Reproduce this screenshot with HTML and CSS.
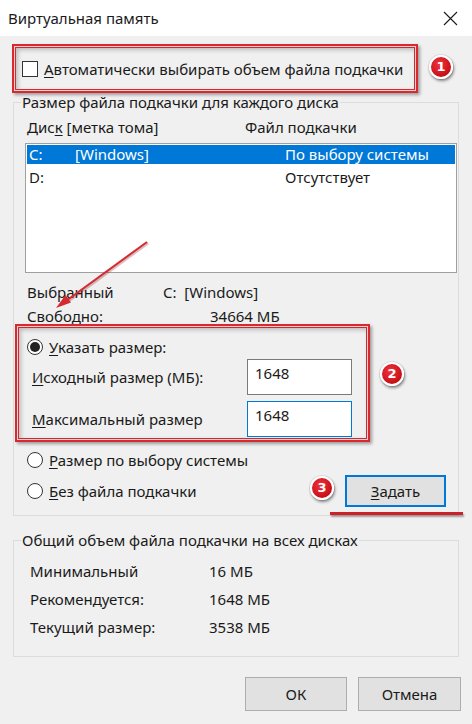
FILE: index.html
```html
<!DOCTYPE html>
<html lang="ru">
<head>
<meta charset="utf-8">
<title>Виртуальная память</title>
<link rel="stylesheet" href="styles.css">
</head>
<body>
<div class="window">
  <header class="titlebar">
    <span class="title">Виртуальная память</span>
    <svg class="close" width="15" height="15" viewBox="0 0 15 15"><path d="M1 1L14 14M14 1L1 14" stroke="#1a1a1a" stroke-width="1.1" fill="none"/></svg>
  </header>

  <main class="content">
    <div class="mark mark-auto">
      <label class="check-row"><span class="checkbox"></span><span><u>А</u>втоматически выбирать объем файла подкачки</span></label>
    </div>

    <fieldset class="group group-disks">
      <legend>Размер файла подкачки для каждого диска</legend>
      <div class="list-head"><span>Дис<u>к</u> [метка тома]</span><span>Файл подкачки</span></div>
      <div class="listbox">
        <div class="row selected"><span>C:</span><span>[Windows]</span><span>По выбору системы</span></div>
        <div class="row"><span>D:</span><span></span><span>Отсутствует</span></div>
      </div>
      <div class="info">
        <span>Выбранный</span><span class="span2">C:&nbsp;&nbsp;[Windows]</span>
        <span>Свободно:</span><span></span><span>34664 МБ</span>
      </div>

      <div class="mark mark-size">
        <div class="radio-row"><span class="radio on"></span><span><u>У</u>казать размер:</span></div>
        <div class="field-row first"><span><u>И</u>сходный размер (МБ):</span><span class="input">1648</span></div>
        <div class="field-row"><span><u>М</u>аксимальный размер</span><span class="input focus">1648</span></div>
      </div>

      <div class="radio-row sys"><span class="radio"></span><span><u>Р</u>азмер по выбору системы</span></div>
      <div class="last-row">
        <div class="radio-row"><span class="radio"></span><span><u>Б</u>ез файла подкачки</span></div>
        <button class="btn default"><u>З</u>адать</button>
      </div>
    </fieldset>

    <fieldset class="group group-total">
      <legend>Общий объем файла подкачки на всех дисках</legend>
      <div class="totals">
        <span>Минимальный</span><span>16 МБ</span>
        <span>Рекомендуется:</span><span>1648 МБ</span>
        <span>Текущий размер:</span><span>3538 МБ</span>
      </div>
    </fieldset>

    <div class="actions">
      <button class="btn">ОК</button>
      <button class="btn">Отмена</button>
    </div>
  </main>

  <svg class="arrow" width="472" height="724" viewBox="0 0 472 724">
    <line x1="147" y1="242" x2="66" y2="301" stroke="rgba(120,0,0,0.25)" stroke-width="3" transform="translate(1,1)"/>
    <line x1="147" y1="242" x2="66" y2="301" stroke="#d42a30" stroke-width="2"/>
    <polygon points="56,308 71,302.5 65.5,295" fill="#d42a30"/>
  </svg>
  <div class="badge b1">1</div>
  <div class="badge b2">2</div>
  <div class="badge b3">3</div>
  <div class="underline-mark"></div>
</div>
</body>
</html>
```

FILE: styles.css
```css
* { box-sizing: border-box; }
html, body { margin: 0; padding: 0; }
body {
  background: #f0f0f0;
  font-family: "Noto Sans", "Open Sans", sans-serif;
  font-size: 15px;
  color: #1a1a1a;
}
u { text-decoration-thickness: 1px; text-underline-offset: 2px; }

.window {
  position: relative;
  width: 472px;
  height: 724px;
  overflow: hidden;
}

.titlebar {
  height: 36px;
  background: #fff;
  display: flex;
  align-items: center;
  justify-content: space-between;
  padding: 0 14px 0 8px;
}
.title { font-size: 15px; line-height: 20px; }
.close { margin-top: 1px; }

.content { padding: 0 13px; }

/* red annotation frames */
.mark {
  border: 2px solid #d42a30;
  box-shadow: inset 0 0 0 1px #f3cfcf, inset 0 0 0 2px #cf2a2f, inset 2px 2px 4px 2px rgba(0,0,0,0.22), 2px 2px 3px rgba(0,0,0,0.35);
}
.mark-auto {
  margin: 8px 0 0 -1px;
  width: 406px;
  height: 49px;
  display: flex;
  align-items: center;
  padding-left: 8px;
}
.check-row { display: flex; align-items: center; gap: 6px; line-height: 20px; }
.checkbox {
  width: 16px; height: 16px;
  border: 1px solid #333;
  background: #fff;
}

.group {
  margin: 0;
  border: 1px solid #dcdcdc;
  min-width: 0;
}
.group legend {
  padding: 0 1px;
  line-height: 18px;
}
.group-disks { padding: 6px 12px 8px 13px; }
.group-disks legend { margin-left: -6px; }

.list-head {
  display: grid;
  grid-template-columns: 218px 1fr;
  line-height: 20px;
}
.listbox {
  margin: 6px -11px 0 -2px;
  height: 130px;
  border: 1px solid #a0a0a0;
  background: #fff;
  padding: 1px;
}
.row {
  display: grid;
  grid-template-columns: 46px 210px 1fr;
  padding-left: 2px;
  height: 19px;
  line-height: 19px;
  margin-bottom: 4px;
}
.row.selected { background: #0078d7; color: #fff; }

.info {
  margin-top: 7px;
  display: grid;
  grid-template-columns: 136px 47px 1fr;
  line-height: 24px;
}
.span2 { grid-column: span 2; }

.mark-size {
  margin: -4px 0 0 -12px;
  width: 355px;
  height: 118px;
  padding: 10px 0 0 10px;
}
.radio-row { display: flex; align-items: center; gap: 6px; line-height: 22px; }
.radio {
  width: 16px; height: 16px;
  border-radius: 50%;
  border: 1px solid #333;
  background: #fff;
  display: flex; align-items: center; justify-content: center;
}
.radio.on::after {
  content: "";
  width: 10px; height: 10px;
  border-radius: 50%;
  background: #222;
}
.field-row {
  display: grid;
  grid-template-columns: 215px 105px;
  align-items: center;
  padding-left: 5px;
  margin-top: 6px;
}
.field-row.first { margin-top: 1px; }
.input {
  height: 36px;
  border: 1px solid #7a7a7a;
  background: #fff;
  padding: 3px 0 0 7px;
  line-height: 20px;
}
.input.focus { border-color: #0078d7; }

.radio-row.sys { margin-top: 7px; }
.last-row {
  margin-top: 4px;
  display: flex;
  align-items: center;
  justify-content: space-between;
}

.btn {
  font: inherit;
  color: #1a1a1a;
  background: #e1e1e1;
  border: 1px solid #adadad;
  padding: 0;
  height: 34px;
}
.btn.default {
  width: 101px;
  height: 32px;
  border: 2px solid #0078d7;
}

.group-total {
  margin-top: 15px;
  padding: 8px 12px 15px 16px;
}
.group-total legend { margin-left: -9px; }
.totals {
  display: grid;
  grid-template-columns: 179px 1fr;
  line-height: 28px;
}

.actions {
  margin: 20px -2px 0 0;
  display: flex;
  justify-content: flex-end;
  gap: 11px;
}
.actions .btn { width: 102px; }
.actions .btn + .btn { width: 103px; }

/* annotations over the dialog */
.arrow { position: absolute; left: 0; top: 0; pointer-events: none; }
.badge {
  position: absolute;
  width: 24px; height: 24px;
  border-radius: 50%;
  background: radial-gradient(circle at 40% 35%, #f0333a, #c80f18 70%);
  border: 2px solid #fff;
  box-shadow: 1px 2px 3px rgba(0,0,0,0.45), 0 0 0 1px #ddd;
  color: #fff;
  font-family: "DejaVu Sans", sans-serif;
  font-weight: bold;
  font-size: 13px;
  line-height: 20px;
  text-align: center;
}
.b1 { left: 429px; top: 55px; }
.b2 { left: 380px; top: 362px; }
.b3 { left: 310px; top: 476px; }
.underline-mark {
  position: absolute;
  left: 330px; top: 512px;
  width: 133px; height: 3px;
  background: #cc2129;
  box-shadow: 1px 2px 2px rgba(0,0,0,0.35);
}
```
